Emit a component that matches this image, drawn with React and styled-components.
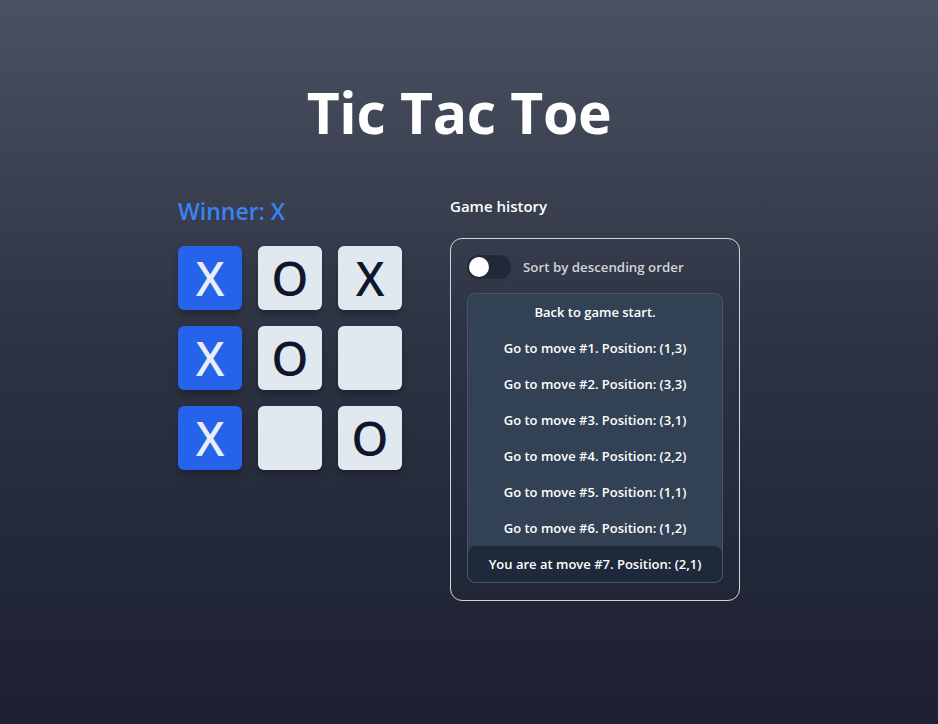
import React from "react";
import styled, { createGlobalStyle } from "styled-components";

const Global = createGlobalStyle`
  html, body { margin: 0; padding: 0; }
  body {
    font-family: "Open Sans", "Noto Sans", "Liberation Sans", sans-serif;
    background: #1c2031;
  }
`;

const Page = styled.div`
  min-height: 724px;
  box-sizing: border-box;
  background: linear-gradient(to bottom, #4a5160 0%, #2e3443 45%, #1c2031 100%);
  display: flex;
  flex-direction: column;
  align-items: center;
  padding-top: 72px;
  padding-right: 20px;
`;

const Title = styled.h1`
  margin: 0;
  font-size: 57px;
  line-height: 80px;
  font-weight: 700;
  color: #ffffff;
  letter-spacing: -0.3px;
`;

const Main = styled.div`
  display: flex;
  gap: 48px;
  margin-top: 42px;
`;

const BoardColumn = styled.div`
  width: 224px;
  display: flex;
  flex-direction: column;
`;

const Status = styled.div`
  color: #3b82f6;
  font-size: 23px;
  font-weight: 600;
  line-height: 30px;
  height: 30px;
  margin-top: 2px;
`;

const Grid = styled.div`
  margin-top: 20px;
  display: grid;
  grid-template-columns: repeat(3, 64px);
  grid-auto-rows: 64px;
  gap: 16px;
`;

const Cell = styled.button`
  border: none;
  padding: 0;
  border-radius: 6px;
  background: ${(p) => (p.$win ? "#2563eb" : "#e2e8f0")};
  color: ${(p) => (p.$win ? "#e9eef6" : "#0f172a")};
  font-family: "Noto Sans", "Open Sans", sans-serif;
  font-size: 47px;
  font-weight: 500;
  line-height: 64px;
  display: flex;
  align-items: center;
  justify-content: center;
  box-shadow: 0 6px 10px -2px rgba(0, 0, 0, 0.25), 0 3px 6px -3px rgba(0, 0, 0, 0.2);
  cursor: pointer;
`;

const HistoryColumn = styled.div`
  width: 290px;
  display: flex;
  flex-direction: column;
`;

const HistoryTitle = styled.div`
  color: #ffffff;
  font-size: 15px;
  font-weight: 600;
  line-height: 22px;
  margin-top: 1px;
`;

const Panel = styled.div`
  margin-top: 21px;
  width: 290px;
  box-sizing: border-box;
  border: 1px solid #d1d5db;
  border-radius: 12px;
  padding: 16px 16px 17px;
  display: flex;
  flex-direction: column;
`;

const ToggleRow = styled.label`
  display: flex;
  align-items: center;
  gap: 12px;
  height: 24px;
`;

const Switch = styled.span`
  width: 44px;
  height: 24px;
  border-radius: 12px;
  background: #1f2937;
  position: relative;
  flex-shrink: 0;
`;

const Knob = styled.span`
  position: absolute;
  left: 2px;
  top: 2px;
  width: 20px;
  height: 20px;
  border-radius: 50%;
  background: #ffffff;
`;

const ToggleLabel = styled.span`
  color: #d1d5db;
  font-size: 13.3px;
  font-weight: 600;
`;

const List = styled.ol`
  list-style: none;
  margin: 14px 0 0;
  padding: 0;
  background: #334155;
  border: 1px solid #475569;
  border-radius: 8px;
  display: flex;
  flex-direction: column;
`;

const Item = styled.li`
  height: 36px;
  display: flex;
  align-items: center;
  justify-content: center;
  color: #ffffff;
  font-size: 13px;
  font-weight: 600;
  border-radius: 8px;
  background: ${(p) => (p.$current ? "#1e293b" : "transparent")};
`;

const squares = ["X", "O", "X", "X", "O", null, "X", null, "O"];
const winLine = [0, 3, 6];

const moves = [
  "Back to game start.",
  "Go to move #1. Position: (1,3)",
  "Go to move #2. Position: (3,3)",
  "Go to move #3. Position: (3,1)",
  "Go to move #4. Position: (2,2)",
  "Go to move #5. Position: (1,1)",
  "Go to move #6. Position: (1,2)",
  "You are at move #7. Position: (2,1)",
];

export default function App() {
  return (
    <>
      <Global />
      <Page>
        <Title>Tic Tac Toe</Title>
        <Main>
          <BoardColumn>
            <Status>Winner: X</Status>
            <Grid>
              {squares.map((s, i) => (
                <Cell key={i} $win={winLine.includes(i)}>
                  {s}
                </Cell>
              ))}
            </Grid>
          </BoardColumn>
          <HistoryColumn>
            <HistoryTitle>Game history</HistoryTitle>
            <Panel>
              <ToggleRow>
                <Switch>
                  <Knob />
                </Switch>
                <ToggleLabel>Sort by descending order</ToggleLabel>
              </ToggleRow>
              <List>
                {moves.map((m, i) => (
                  <Item key={i} $current={i === moves.length - 1}>
                    {m}
                  </Item>
                ))}
              </List>
            </Panel>
          </HistoryColumn>
        </Main>
      </Page>
    </>
  );
}
